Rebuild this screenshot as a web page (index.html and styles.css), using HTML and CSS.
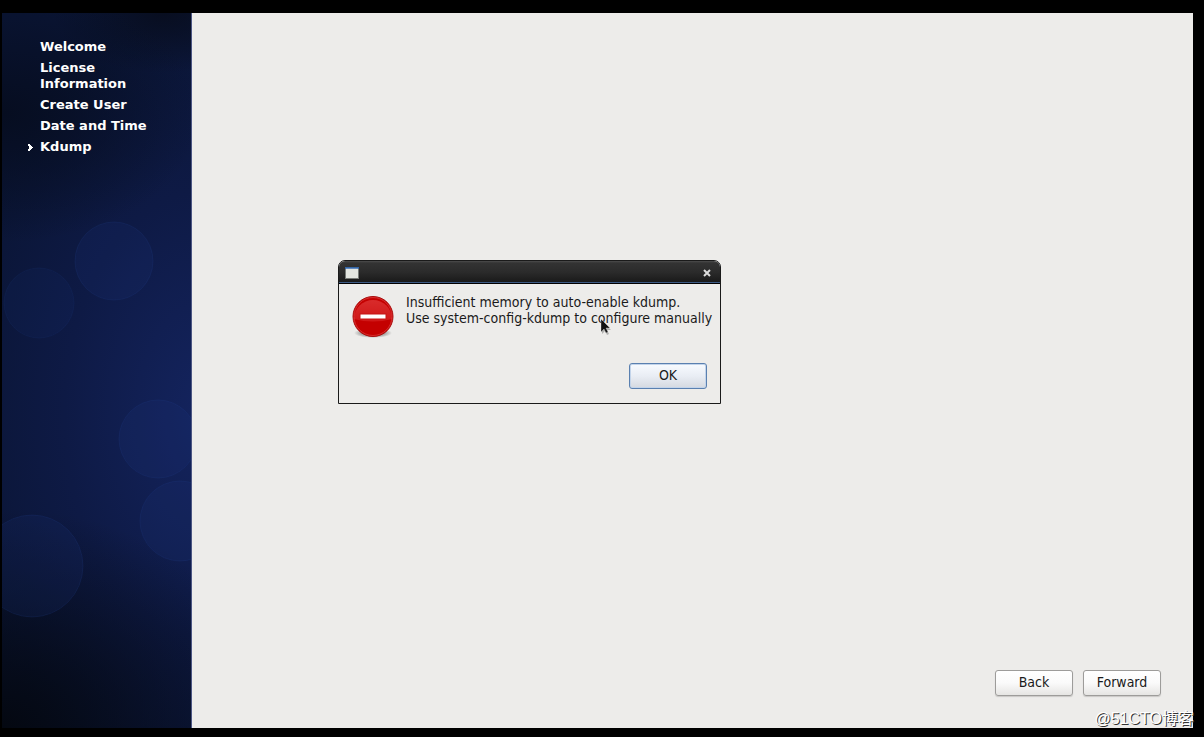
FILE: index.html
```
<!DOCTYPE html>
<html lang="en">
<head>
<meta charset="utf-8">
<title>Kdump</title>
<link rel="stylesheet" href="styles.css">
</head>
<body>
<div class="screen">
  <aside class="sidebar">
    <svg class="bubbles" viewBox="0 0 190 715" preserveAspectRatio="xMinYMin slice" aria-hidden="true">
      <circle cx="112" cy="248" r="39"/>
      <circle class="faint" cx="37" cy="290" r="35"/>
      <circle cx="156" cy="426" r="39"/>
      <circle cx="178" cy="508" r="40"/>
      <circle cx="30" cy="553" r="51"/>
    </svg>
    <ol class="steps">
      <li>Welcome</li>
      <li>License Information</li>
      <li>Create User</li>
      <li>Date and Time</li>
      <li class="current" aria-current="step"><svg class="arrow" viewBox="0 0 5 7" aria-hidden="true"><path d="M0 0h2v1h1v1h1v1h1v1H4v1H3v1H2v1H0V5h1V2H0z"/></svg>Kdump</li>
    </ol>
  </aside>
  <main class="content">
    <div class="actions">
      <button class="btn" type="button">Back</button>
      <button class="btn" type="button">Forward</button>
    </div>
  </main>
</div>

<section class="dialog" role="alertdialog" aria-describedby="message">
  <header class="titlebar">
    <svg class="window-icon" viewBox="0 0 14 12" aria-hidden="true">
      <rect width="14" height="12" fill="#777b77"/>
      <rect x="1" y="2" width="12" height="9" fill="#e4e6e1"/>
      <rect width="14" height="2" fill="#3465a4"/>
      <rect x="1" y="1" width="12" height="1" fill="#638bc0"/>
    </svg>
    <button class="close" type="button" aria-label="Close">
      <svg viewBox="0 0 8 8" aria-hidden="true"><path d="M1 1l6 6M7 1L1 7"/></svg>
    </button>
  </header>
  <div class="dialog-body">
    <div class="message-row">
      <svg class="error-icon" viewBox="0 0 42 46" aria-hidden="true">
        <defs>
          <radialGradient id="shade"><stop offset="0.500" stop-color="#000" stop-opacity=".4"/><stop offset="1" stop-color="#000" stop-opacity="0"/></radialGradient>
          <linearGradient id="gloss" x2="0" y2="1"><stop offset="0" stop-color="#d92b2b"/><stop offset="1" stop-color="#cf1717"/></linearGradient>
        </defs>
        <ellipse cx="21" cy="39" rx="19" ry="5" fill="url(#shade)"/>
        <circle cx="21" cy="22.500" r="20" fill="#c40000" stroke="#a90d0d"/>
        <path d="M2 25a19 19 0 1 1 38 0Q21 30 2 25z" fill="url(#gloss)"/>
        <circle cx="21" cy="22.500" r="19" fill="none" stroke="#e34a4a" stroke-opacity=".6"/>
        <rect x="8" y="20" width="26" height="5" fill="#fff" stroke="#c51515"/>
      </svg>
      <p class="message" id="message">Insufficient memory to auto-enable kdump.<br>Use system-config-kdump to configure manually</p>
    </div>
    <div class="dialog-actions"><button class="btn btn-default" type="button">OK</button></div>
  </div>
</section>

<svg class="cursor" viewBox="0 0 12 18" aria-hidden="true">
  <path class="cursor-shadow" d="M2 3v13l3-3 2 4 2-1-2-4h4z"/>
  <path d="M1 1v13l3-3 2 4 2-1-2-4h4z"/>
</svg>
<div class="watermark">@51CTO博客</div>
</body>
</html>
```
FILE: styles.css
```
* { box-sizing: border-box; }

body {
  margin: 0;
  background: #000;
  color: #1a1a1a;
  font: 14px/16px "DejaVu Sans Condensed", "DejaVu Sans", sans-serif;
}

.screen {
  display: flex;
  min-height: 100vh;
  padding: 13px 11px 9px 2px;
}

.sidebar {
  position: relative;
  flex: 0 0 190px;
  overflow: hidden;
  border-right: 1px solid #4c5683;
  background:
    radial-gradient(ellipse 280px 220px at 0 100%, #040811, transparent),
    radial-gradient(ellipse 200px 130px at 0 14%, #060d20, transparent),
    radial-gradient(ellipse 110px 60px at 85% 0, #080e20, transparent),
    radial-gradient(ellipse 260px 400px at 110% 56%, #14245f, #0e1a45 56%, #0a1535);
}

.bubbles {
  position: absolute;
  inset: 0;
  width: 100%;
  height: 100%;
  fill: #1c3b85;
  fill-opacity: 0.16;
  stroke: #2c50a0;
  stroke-opacity: 0.14;
}

.bubbles .faint {
  fill-opacity: 0.1;
  stroke-opacity: 0.1;
}

.steps {
  position: relative;
  display: flex;
  flex-direction: column;
  gap: 5px;
  margin: 0;
  padding: 26px 40px 0 38px;
  list-style: none;
  color: #fff;
  font-family: "DejaVu Sans", sans-serif;
  font-size: 13px;
  font-weight: bold;
}

.current {
  display: flex;
  align-items: center;
  margin-left: -12px;
}

.arrow {
  width: 5px;
  height: 7px;
  margin-right: 7px;
  fill: #fff;
}

.content {
  flex: 1;
  display: flex;
  flex-direction: column;
  justify-content: flex-end;
  padding: 32px;
  background: #edecea;
}

.actions {
  display: flex;
  justify-content: flex-end;
  gap: 10px;
}

.btn {
  width: 78px;
  height: 26px;
  padding: 0 0 2px;
  border: 1px solid #9d9c9a;
  border-radius: 3px;
  background: linear-gradient(#fff, #fafafa 50%, #e6e5e3);
  box-shadow: 0 1px 1px #c9c8c6;
  color: #1a1a1a;
  font: inherit;
}

.btn-default {
  border-color: #5a80b0;
  background: linear-gradient(#f8fbff, #e9edf4 50%, #d5d9e0);
  box-shadow: inset 0 0 0 1px #c3d4ea;
}

.dialog {
  position: absolute;
  top: 260px;
  left: 338px;
  width: 383px;
  border: 1px solid #1a1a1a;
  border-radius: 7px 7px 0 0;
  background: #edecea;
}

.titlebar {
  display: flex;
  align-items: center;
  justify-content: space-between;
  height: 23px;
  padding: 2px 9px 0 6px;
  border-bottom: 1px solid #000;
  border-radius: 6px 6px 0 0;
  background: linear-gradient(#4c4c4c, #333 2px, #2b2b2b 50%, #181818);
  box-shadow: inset 0 -1px #3c5a84;
}

.window-icon {
  width: 14px;
  height: 12px;
}

.close {
  display: flex;
  padding: 0;
  border: 0;
  background: none;
}

.close svg {
  width: 8px;
  height: 8px;
  fill: none;
  stroke: #dcdcdc;
  stroke-width: 2;
}

.dialog-body {
  padding: 10px 13px 14px;
}

.message-row {
  display: flex;
  gap: 12px;
}

.error-icon {
  flex: none;
  width: 42px;
  height: 46px;
}

.message {
  margin: 0;
  white-space: nowrap;
}

.dialog-actions {
  display: flex;
  justify-content: flex-end;
  padding-top: 23px;
}

.cursor {
  position: absolute;
  top: 318px;
  left: 600px;
  width: 12px;
  height: 18px;
  fill: #111;
  stroke: #fff;
  stroke-opacity: 0.6;
  stroke-width: 0.500;
}

.cursor .cursor-shadow {
  fill: #000;
  fill-opacity: 0.25;
  stroke: none;
}

.watermark {
  position: absolute;
  right: 10px;
  bottom: 6px;
  color: #fff;
  font: 16px/24px "Liberation Sans", "Noto Sans CJK SC", sans-serif;
  text-shadow: 1px 1px #333;
}
```
